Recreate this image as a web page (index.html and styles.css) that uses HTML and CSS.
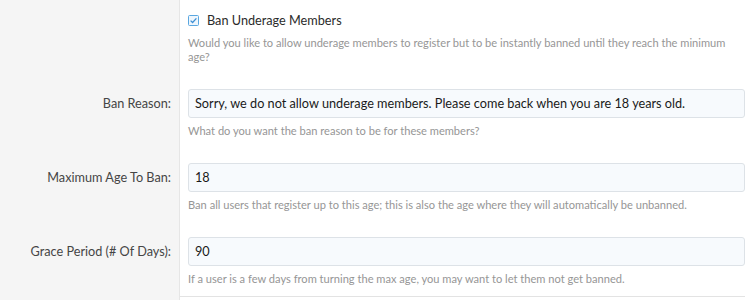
FILE: index.html
```html
<!DOCTYPE html>
<html>
<head>
<meta charset="utf-8">
<link rel="stylesheet" href="styles.css">
</head>
<body>
<div class="form">
  <div class="row row-first">
    <div class="label"></div>
    <div class="field">
      <label class="check">
        <span class="box"><svg viewBox="0 0 11 11" width="11" height="11"><rect x="0.5" y="0.5" width="10" height="10" rx="1" fill="#eef6fd" stroke="#5aa7e0"/><path d="M2.6 5.6 L4.6 7.5 L8.4 3.4" fill="none" stroke="#3d8fd4" stroke-width="1.3"/></svg></span>
        <span class="check-text">Ban Underage Members</span>
      </label>
      <div class="explain">Would you like to allow underage members to register but to be instantly banned until they reach the minimum age?</div>
    </div>
  </div>
  <div class="row">
    <div class="label"><span class="label-text">Ban Reason:</span></div>
    <div class="field">
      <div class="input">Sorry, we do not allow underage members. Please come back when you are 18 years old.</div>
      <div class="explain">What do you want the ban reason to be for these members?</div>
    </div>
  </div>
  <div class="row">
    <div class="label"><span class="label-text">Maximum Age To Ban:</span></div>
    <div class="field">
      <div class="input">18</div>
      <div class="explain">Ban all users that register up to this age; this is also the age where they will automatically be unbanned.</div>
    </div>
  </div>
  <div class="row row-last">
    <div class="label"><span class="label-text">Grace Period (# Of Days):</span></div>
    <div class="field">
      <div class="input">90</div>
      <div class="explain">If a user is a few days from turning the max age, you may want to let them not get banned.</div>
    </div>
  </div>
  <div class="row row-end">
    <div class="label"></div>
    <div class="field"><div class="sep"></div></div>
  </div>
</div>
</body>
</html>
```

FILE: styles.css
```css
html, body {
  margin: 0;
  padding: 0;
  background: #ffffff;
}
body {
  font-family: Lato, "Open Sans", sans-serif;
  font-size: 12.7px;
  color: #141414;
  width: 753px;
  height: 300px;
  overflow: hidden;
}
.form {
  display: flex;
  flex-direction: column;
}
.row {
  display: grid;
  grid-template-columns: 180px 1fr;
}
.label {
  background: #f5f5f5;
  border-right: 1px solid #e6e6e6;
  padding: 12px 8px 0 0;
  text-align: right;
}
.label-text {
  display: block;
  line-height: 29px;
  color: #454545;
}
.field {
  padding: 12px 8px 13px 8px;
}
.row-first .field {
  padding-top: 12px;
  padding-bottom: 13px;
}
.row-last .field {
  padding-bottom: 10px;
}
.row-end .field {
  padding: 0 8px 0 0;
  height: 10px;
}
.sep {
  border-top: 1px solid #e3e3e3;
}
.check {
  display: flex;
  align-items: center;
  gap: 8px;
  line-height: 16px;
  font-size: 12.7px;
  color: #2b2b2b;
}
.box {
  display: flex;
  width: 11px;
  height: 11px;
}
.explain {
  margin-top: 6px;
  font-size: 11.1px;
  line-height: 14px;
  color: #969696;
}
.row-first .explain {
  margin-top: 8px;
}
.input {
  height: 27px;
  line-height: 27px;
  border: 1px solid #dde2e7;
  border-radius: 3px;
  background: #f7fafd;
  padding: 0 6px;
  color: #1a1a1a;
  white-space: nowrap;
  overflow: hidden;
}
```
